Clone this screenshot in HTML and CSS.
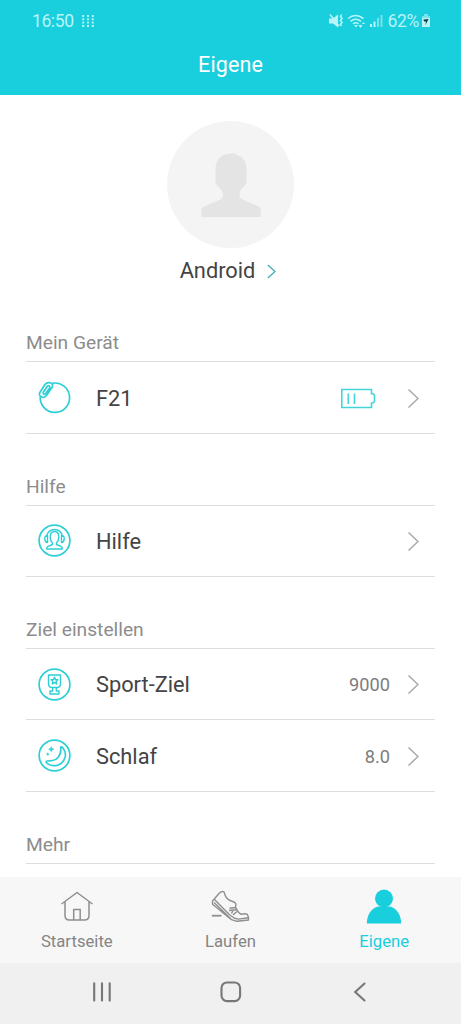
FILE: index.html
```html
<!DOCTYPE html>
<html lang="de">
<head>
<meta charset="utf-8">
<title>Eigene</title>
<link rel="stylesheet" href="styles.css">
</head>
<body>
<div class="screen">
  <header class="header">
    <div class="status">
      <span class="time">16:50</span>
      <svg class="dots" viewBox="0 0 12 12"><path d="M1.200 1h.01M6 1h.01M10.800 1h.01M1.200 4.300h.01M6 4.300h.01M10.800 4.300h.01M1.200 7.600h.01M6 7.600h.01M10.800 7.600h.01M1.200 10.900h.01M6 10.900h.01M10.800 10.900h.01"/></svg>
      <svg class="signals" viewBox="0 0 56 18">
        <path class="solid" d="M0 6.500h4l5-4v13l-5-4H0z"/>
        <path class="line" d="M1 2.500l9 11.500M12.500 2.500l-1 2 1.500 2-1.500 2 1.500 2-1.500 2 1 1.500"/>
        <path class="line" d="M19 6.500q7.500-6 15.500 0M21.500 9.300q5-4 10.500 0M24 11.800q3-2 5.500 0"/>
        <path class="solid" d="M25 13l2 2.500 2-2.500zM29.500 13l2 3 2-3zM33 12l1.500-2 1.500 2z"/>
        <path class="solid" d="M41 12h2v3h-2zM44.500 9.500h2V15h-2z"/>
        <path class="faint" d="M48 6h2v9h-2zM51.500 3h2v12h-2z"/>
      </svg>
      <span class="percent">62%</span>
      <svg class="charge" viewBox="0 0 10 16"><path class="faint" d="M1 3h2V1h4v2h2v4H1z"/><path class="solid" d="M1 5h8v9H1z"/><path class="bolt" d="M2.500 6.500l5-.5-3 6 .5-3.500h-2z"/></svg>
    </div>
    <h1 class="title">Eigene</h1>
  </header>

  <main class="content">
    <section class="profile">
      <div class="avatar">
        <svg class="person" viewBox="0 0 60 66"><path d="M14.500 17C14.500 6 22 2 30 1.500q5-1 6.500 2C43 5 45.500 10 45.500 18V30q-1 4-4 6-3 3-3 6v2.500q2 3 6 4.500l10 4q5 2 5.300 5V65H.3v-7q.2-3 5.200-4.500L16 49q5-2 6-4.500V42q0-3-3.500-6-3-2-4-6z"/></svg>
      </div>
      <div class="name">Android<svg class="name-chevron" viewBox="0 0 9 15"><path d="M.8 1l7.200 6.500L.8 14"/></svg></div>
    </section>

    <h2 class="section">Mein Gerät</h2>
    <div class="row">
      <svg class="icon" viewBox="0 0 36 36"><path d="M15.500 3.200A14.700 14.700 0 1 1 3.300 16M2.800 12.500L8 4.500q2-2.500 5-1.800 3.500 1 2.300 4.300L9.500 15.500q-2 2.500-4.700 1.500-3.300-1.200-2-4.500zM6.300 12.300l4-6q1.200-1 2.200-.2.800.8 0 2.200L8.500 13.800q-1 .9-2 .2-.7-.7-.2-1.700z"/></svg>
      <span class="label">F21</span>
      <svg class="battery" viewBox="0 0 36 21"><path d="M1.800 1.500h29.700v4.200h1.500l1.500 1.500v6.300L33 15h-1.500v4.500H1.800zM8.300 5.500v10.500M14.500 5.500v10.500"/></svg>
      <svg class="chevron" viewBox="0 0 12 21"><path d="M1.500 1.500l9.500 9-9.500 9"/></svg>
    </div>

    <h2 class="section">Hilfe</h2>
    <div class="row">
      <svg class="icon" viewBox="0 0 36 36"><circle cx="17.500" cy="17.500" r="15.400"/><path class="thin" d="M9.500 14C10 4 25 4 25.500 14M10.500 12.500q-3 0-2.700 3.500.2 3.500 2.700 3.500zM24.500 12.500q3 0 2.700 3.500-.2 3.500-2.700 3.500zM13.200 14q0-5.500 4.300-5.500t4.300 5.500q0 4-2.300 6v1.500l5 2.200q1 .8.800 2.300H9.700q-.2-1.500.8-2.300l5-2.200V20q-2.300-2-2.300-6z"/></svg>
      <span class="label">Hilfe</span>
      <svg class="chevron" viewBox="0 0 12 21"><path d="M1.500 1.500l9.500 9-9.500 9"/></svg>
    </div>

    <h2 class="section">Ziel einstellen</h2>
    <div class="row">
      <svg class="icon" viewBox="0 0 36 36"><circle cx="17.500" cy="17.500" r="15.400"/><path class="thin" d="M11.500 8h12v9q0 3-3 3.500h-6q-3-.5-3-3.500zM15.700 20.500v3.500h-2.700v3h9v-3h-2.700v-3.500M17.500 10.300l1 2.300 2.400.2-1.800 1.700.6 2.500-2.200-1.300-2.200 1.300.6-2.500-1.800-1.700 2.400-.2z"/></svg>
      <span class="label">Sport-Ziel</span>
      <span class="value">9000</span>
      <svg class="chevron" viewBox="0 0 12 21"><path d="M1.500 1.500l9.500 9-9.500 9"/></svg>
    </div>
    <div class="row">
      <svg class="icon" viewBox="0 0 36 36"><circle cx="17.500" cy="17.500" r="15.400"/><path d="M23.700 9Q24.500 8.500 26 10 29 14 28.300 18.500 26.500 25.500 20 27.500 13 28.500 9.300 24.500 8.800 23 10.500 23 18 23 21 19.500 24.500 15.500 23.700 9z"/><path class="spark" d="M14.200 8.700l.8 1.800 1.800.7-1.800.8-.8 1.800-.8-1.800-1.800-.8 1.800-.7zM10.700 14.800l.4.900.9.400-.9.400-.4.900-.4-.9-.9-.4.900-.4z"/></svg>
      <span class="label">Schlaf</span>
      <span class="value">8.0</span>
      <svg class="chevron" viewBox="0 0 12 21"><path d="M1.500 1.500l9.500 9-9.500 9"/></svg>
    </div>

    <h2 class="section">Mehr</h2>
  </main>

  <nav class="tabs">
    <div class="tab">
      <svg class="tab-icon home" viewBox="0 0 42 36"><path d="M5.500 16L21 4.500 36.500 16M9 14v13.500q0 4.500 4.500 4.500h15q4.500 0 4.500-4.500V14M17.700 32V21.500h6.500V32"/></svg>
      <span>Startseite</span>
    </div>
    <div class="tab">
      <svg class="tab-icon" viewBox="0 0 42 36"><path d="M3.500 13L10.500 5q2-2 4.500-1.200 1 4 2.700 6.200 2 2.500 6 3.500 2.300.7 3.300 2.500l-.5 3.500 3.300 5.200 2.500 1.600q4-1 6 0 1.500 2.200 1.200 5.700l-11.700 1.300-5.300-1.600L3.500 16.300zM5.500 11.500l15 15.200 5 3.600 4 .8 9.700-1.300M5 14.500L22 31"/><path d="M20.500 20.300l6-.8M20 22.500l7.500-.7M22.500 25.500l2-4M24 27l4-3.500"/><path class="dash" d="M2.800 27.700h9.700"/></svg>
      <span>Laufen</span>
    </div>
    <div class="tab active">
      <svg class="tab-icon" viewBox="0 0 42 36"><circle cx="21" cy="10.500" r="9"/><path d="M3.800 35.500C4 26 9 20 15 18.500h12C33 20 38 26 38.200 35.500z"/></svg>
      <span>Eigene</span>
    </div>
  </nav>

  <div class="system-nav">
    <svg class="sys" viewBox="0 0 24 24"><path d="M4.200 3.400v17.200M12 3.400v17.200M19.700 3.400v17.200"/></svg>
    <svg class="sys" viewBox="0 0 24 24"><rect x="2.500" y="2.500" width="18.600" height="18.600" rx="5.500"/></svg>
    <svg class="sys" viewBox="0 0 24 24"><path d="M16.500 3.500L7.200 12l9.300 8.500"/></svg>
  </div>
</div>
</body>
</html>
```
FILE: styles.css
```css
* { box-sizing: border-box; }
body { margin: 0; font-family: Roboto, sans-serif; background: #fff; }
svg { display: block; fill: none; flex: none; }
.screen { width: 461px; height: 1024px; display: flex; flex-direction: column; overflow: hidden; }

.header { height: 95px; flex: none; background: #19cedd; color: #fff; }
.status { height: 41px; padding: 0 30px 0 32px; display: flex; align-items: center; color: #b9f5f8; font-size: 17.5px; }
.time { width: 50px; letter-spacing: -.4px; }
.dots { width: 12px; height: 12px; stroke: #b9f5f8; stroke-width: 2.3; stroke-linecap: round; }
.signals { width: 56px; height: 18px; margin-left: auto; }
.solid { fill: #b9f5f8; }
.line { stroke: #b9f5f8; stroke-width: 1.6; }
.faint { fill: #75e4ec; }
.percent { margin-left: 2px; letter-spacing: -.3px; }
.charge { width: 10px; height: 16px; margin-left: 2px; }
.bolt { fill: #123d42; }
.title { margin: 11px 0 0; text-align: center; font-size: 21.5px; line-height: 26px; font-weight: 400; letter-spacing: .1px; }

.content { flex: 1; min-height: 0; overflow: hidden; padding: 0 26px; }
.profile { height: 195.6px; padding-top: 26px; display: flex; flex-direction: column; align-items: center; }
.avatar { width: 127px; height: 127px; flex: none; border-radius: 50%; background: #f4f4f4; display: flex; justify-content: center; padding-top: 31px; }
.person { width: 60px; height: 66px; fill: #e4e4e4; }
.name { display: flex; align-items: center; gap: 12px; margin-top: 9px; padding-right: 5px; font-size: 21.8px; line-height: 28px; color: #444; }
.name-chevron { width: 9px; height: 15px; stroke: #4aafb8; stroke-width: 1.4; }

.section { margin: 0; height: 71.65px; padding-bottom: 6px; border-bottom: 1px solid #dedede; display: flex; align-items: flex-end; font-size: 19.2px; line-height: 25px; font-weight: 400; color: #8c8c8c; }
.row { height: 71.65px; padding: 1px 16px 0 11px; border-bottom: 1px solid #dedede; display: flex; align-items: center; }
.icon { width: 36px; height: 36px; stroke: #2dcfd5; stroke-width: 1.7; stroke-linejoin: round; }
.thin { stroke-width: 1.4; }
.spark { fill: #2dcfd5; stroke-width: .6; }
.label { margin-left: 23px; font-size: 21.8px; color: #444; }
.value { margin-left: auto; font-size: 18.2px; color: #7d7d7d; }
.chevron { width: 12px; height: 21px; margin-left: auto; stroke: #a9a9a9; stroke-width: 1.5; }
.value + .chevron { margin-left: 17px; }
.battery { width: 36px; height: 21px; margin-left: auto; stroke: #43d5da; stroke-width: 1.6; }
.battery + .chevron { margin-left: 31px; }

.tabs { height: 86px; flex: none; display: grid; grid-template-columns: repeat(3, 1fr); background: #f7f7f7; }
.tab { display: flex; flex-direction: column; align-items: center; padding-top: 11px; font-size: 16.7px; line-height: 20px; color: #858585; }
.tab-icon { width: 42px; height: 36px; margin-bottom: 8px; stroke: #8f8f8f; stroke-width: 1.4; stroke-linejoin: round; }
.home { stroke-width: 1.5; }
.dash { stroke-width: 1.8; }
.active { color: #19cedd; }
.active .tab-icon { fill: #19cedd; stroke: none; }
.system-nav { height: 61px; flex: none; background: #f0f0f0; display: flex; justify-content: center; align-items: center; gap: 105px; padding-bottom: 3px; }
.sys { width: 24px; height: 24px; stroke: #777; stroke-width: 2.1; stroke-linecap: round; }
```
